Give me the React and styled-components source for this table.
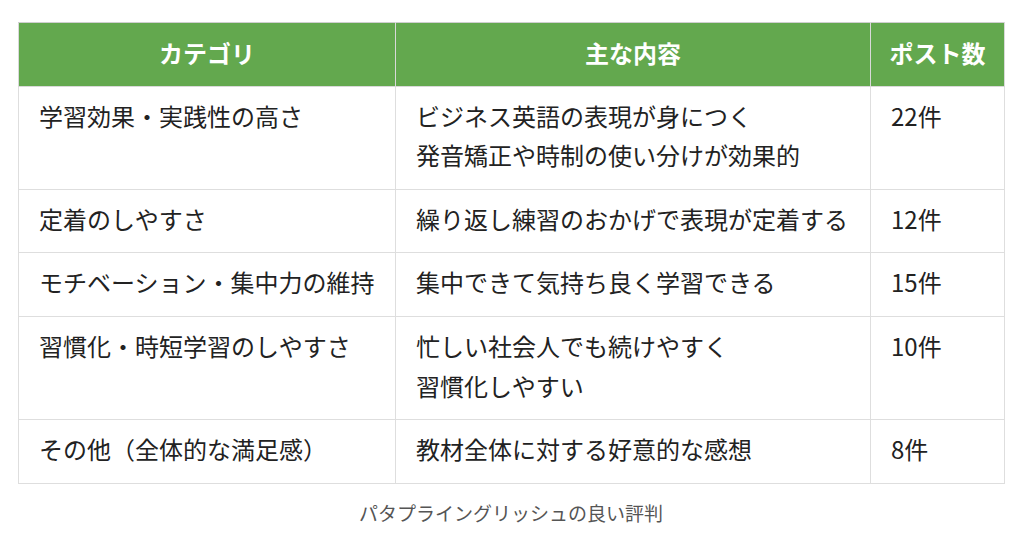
import React from 'react';
import styled, { createGlobalStyle } from 'styled-components';

const GlobalStyle = createGlobalStyle`
  html, body {
    margin: 0;
    padding: 0;
    background: #fff;
  }
  body {
    font-family: "Noto Sans CJK JP", "Noto Sans", sans-serif;
    color: #222;
  }
`;

const Figure = styled.figure`
  margin: 22px 20px 0 18px;
`;

const Table = styled.table`
  width: 100%;
  border-collapse: collapse;
  table-layout: fixed;
  font-size: 24px;
  line-height: 39.6px;
`;

const HeadCell = styled.th`
  background: #63a84e;
  color: #fff;
  font-weight: 700;
  text-align: center;
  white-space: nowrap;
  padding: 10px 8px 13px;
  border: 1px solid #d9d9d9;
  border-top-color: #cfcfcf;
  & + & {
    border-left-color: #e4eedf;
  }
`;

const Cell = styled.td`
  vertical-align: top;
  text-align: left;
  padding: 9px 20px 14px;
  border: 1px solid #dedede;
  color: #222;
  white-space: nowrap;
`;

const Caption = styled.figcaption`
  margin-top: 15px;
  text-align: center;
  font-size: 19px;
  line-height: 28px;
  color: #555;
`;

const rows = [
  { category: '学習効果・実践性の高さ', content: ['ビジネス英語の表現が身につく', '発音矯正や時制の使い分けが効果的'], count: '22件' },
  { category: '定着のしやすさ', content: ['繰り返し練習のおかげで表現が定着する'], count: '12件' },
  { category: 'モチベーション・集中力の維持', content: ['集中できて気持ち良く学習できる'], count: '15件' },
  { category: '習慣化・時短学習のしやすさ', content: ['忙しい社会人でも続けやすく', '習慣化しやすい'], count: '10件' },
  { category: 'その他（全体的な満足感）', content: ['教材全体に対する好意的な感想'], count: '8件' },
];

export default function App() {
  return (
    <>
      <GlobalStyle />
      <Figure>
        <Table>
          <colgroup>
            <col style={{ width: 377 }} />
            <col style={{ width: 475 }} />
            <col style={{ width: 134 }} />
          </colgroup>
          <thead>
            <tr>
              <HeadCell>カテゴリ</HeadCell>
              <HeadCell>主な内容</HeadCell>
              <HeadCell>ポスト数</HeadCell>
            </tr>
          </thead>
          <tbody>
            {rows.map((r) => (
              <tr key={r.category}>
                <Cell>{r.category}</Cell>
                <Cell>
                  {r.content.map((line, i) => (
                    <React.Fragment key={line}>
                      {i > 0 && <br />}
                      {line}
                    </React.Fragment>
                  ))}
                </Cell>
                <Cell>{r.count}</Cell>
              </tr>
            ))}
          </tbody>
        </Table>
        <Caption>パタプライングリッシュの良い評判</Caption>
      </Figure>
    </>
  );
}
